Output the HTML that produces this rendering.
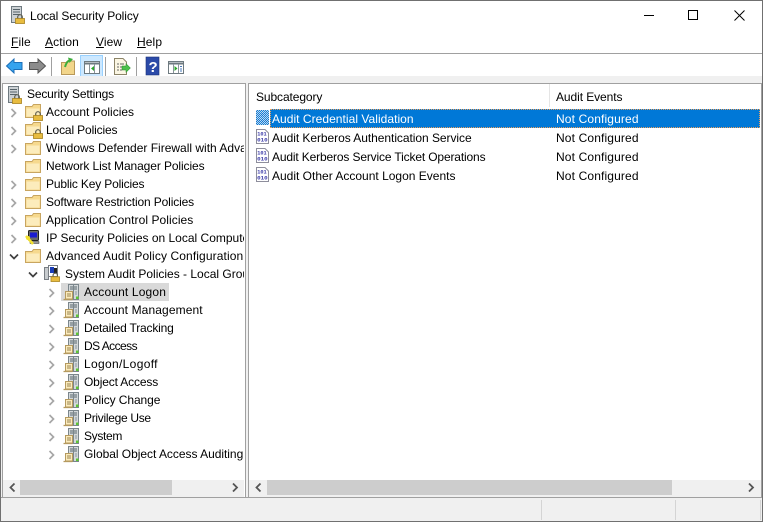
<!DOCTYPE html>
<html><head><meta charset="utf-8"><style>
html,body{margin:0;padding:0;background:#fff}
#w{position:relative;width:763px;height:522px;overflow:hidden;background:#fff;font:12px "Liberation Sans",sans-serif;color:#000}
#w div,#w svg{position:absolute}
.t{white-space:nowrap;line-height:16px;height:16px}
u{text-decoration:underline}
</style></head><body><div id="w">
<svg width="0" height="0"><defs>
<symbol id="folder" viewBox="0 0 16 16"><path d="M.5 3.500V14.500H15.500V1.500H8.500L7 3.500H.5Z" fill="#f6d98e" stroke="#c8a560"/><path d="M1.500 5.500H14.500V13.500H1.500Z" fill="#fcecbc"/></symbol>
<symbol id="lock" viewBox="0 0 10 10"><path d="M2.700 5V3A2.300 2.300 0 0 1 7.300 3V5" fill="none" stroke="#5e5e50" stroke-width="1.200"/><rect x=".5" y="4.500" width="9" height="5" fill="#e8bc40" stroke="#a8831f" stroke-width=".8"/></symbol>
<symbol id="srv" viewBox="0 0 16 17"><rect x="5.500" y=".5" width="10" height="15" fill="#d3d8da" stroke="#7b868c"/><path d="M7 3H14M7 5H14" stroke="#5b676d"/><path d="M10.500 1V15" stroke="#7b868c"/><path d="M12 8h2M12 10h2" stroke="#8d989e"/><rect x="2.500" y="7.500" width="7" height="7.500" fill="#fbebbc" stroke="#b59a5f"/><path d="M4 10h4M4 12h4" stroke="#9a8654"/><path d="M.5 15.500H9.500" stroke="#b59a5f" stroke-width="1.300"/><rect x="13" y="12.500" width="2.500" height="2.500" fill="#5cc832"/></symbol>
<symbol id="aud" viewBox="0 0 13 15"><path d="M.5.5H9L12.500 4V14.500H.5Z" fill="#fff" stroke="#8e8e9c"/><text x="1.200" y="6.400" font-size="5.600" font-weight="bold" font-family="Liberation Mono" fill="#3a3aa8" textLength="9.500" lengthAdjust="spacingAndGlyphs">101</text><text x="1.200" y="12.600" font-size="5.600" font-weight="bold" font-family="Liberation Mono" fill="#3a3aa8" textLength="10.500" lengthAdjust="spacingAndGlyphs">010</text></symbol>
<symbol id="chr" viewBox="0 0 8 10"><path d="M1.500 1L5.500 5L1.500 9" fill="none" stroke="#a6a6a6" stroke-width="1.700"/></symbol>
<symbol id="chd" viewBox="0 0 10 8"><path d="M1 1.500L5 5.500L9 1.500" fill="none" stroke="#404040" stroke-width="1.700"/></symbol>
<symbol id="sec" viewBox="0 0 14 18"><rect x=".5" y=".5" width="10" height="16" fill="#ccd1d4" stroke="#6f7a80"/><path d="M2 3.500h7M2 6h7M2 8.500h7" stroke="#56636a"/><use href="#lock" x="4" y="8" width="10" height="10"/></symbol>
</defs></svg>

<div style="left:0;top:0;width:763px;height:1px;background:#707070"></div>
<div style="left:0;top:0;width:1px;height:522px;background:#707070"></div>
<div style="left:762px;top:0;width:1px;height:522px;background:#707070"></div>
<div style="left:0;top:521px;width:763px;height:1px;background:#707070"></div>

<svg style="left:11px;top:6px" width="14" height="18"><use href="#sec"/></svg>
<div class="t" style="left:30px;top:8px;letter-spacing:-.1px">Local Security Policy</div>
<svg style="left:640px;top:5px" width="115" height="22"><path d="M4 10.500H14" stroke="#000"/><rect x="48.500" y="5.500" width="9" height="9" fill="none" stroke="#000"/><path d="M94.500 5.500L104.500 15.500M104.500 5.500L94.500 15.500" stroke="#000" fill="none"/></svg>

<div class="t" style="left:11px;top:34px;letter-spacing:.1px"><u>F</u>ile</div>
<div class="t" style="left:45px;top:34px;letter-spacing:.1px"><u>A</u>ction</div>
<div class="t" style="left:96px;top:34px;letter-spacing:.1px"><u>V</u>iew</div>
<div class="t" style="left:137px;top:34px;letter-spacing:.1px"><u>H</u>elp</div>
<div style="left:1px;top:53px;width:761px;height:1px;background:#a0a0a0"></div>

<div style="left:80px;top:55px;width:21px;height:20px;background:#cce8ff;border:1px solid #99d1ff"></div>
<svg style="left:0;top:54px" width="200" height="23" viewBox="0 0 200 23">
<path d="M6.500 12L14 5V8.500H22V15.500H14V19Z" fill="#35a3ee" stroke="#1d6fb8"/>
<path d="M45.500 12L38 5V8.500H29.500V15.500H38V19Z" fill="#8c8c8c" stroke="#555"/>
<path d="M51.500 3V22M105.500 3V22M136.500 3V22" stroke="#a0a0a0"/>
<path d="M61.500 8.500H66L67.500 7H74.500V20.500H61.500Z" fill="#f2d58a" stroke="#b9995a"/><path d="M65 13C66 9 68 7 70 6" fill="none" stroke="#3cae3c" stroke-width="2"/><path d="M68 3.500L73 5L69.500 9Z" fill="#3cae3c"/>
<rect x="84.500" y="7.500" width="15" height="12" fill="#fff" stroke="#6e7a80"/><path d="M84.500 9.500H99.500" stroke="#6e7a80" stroke-width="2"/><path d="M89.500 10V19M94.500 10V19" stroke="#8a949a"/><path d="M94 12V17L91 14.500Z" fill="#2ba82b"/>
<path d="M114.500 4.500H123L126.500 8V20.500H114.500Z" fill="#fbf6e3" stroke="#8c8468"/><path d="M117 10h2M117 13h2M117 16h2M120 10h4M120 13h2M120 16h2" stroke="#666"/><path d="M122 12H126V9.500L130.500 14L126 18.500V16H122Z" fill="#4cc04c" stroke="#2b8a2b" stroke-width=".5"/>
<rect x="146" y="3" width="13" height="18" fill="#2b4aa8" stroke="#1c3278" stroke-width=".6"/><text x="148.500" y="18" font-size="15" font-weight="bold" font-family="Liberation Sans" fill="#fff">?</text>
<rect x="168.500" y="7.500" width="15" height="12" fill="#fff" stroke="#6e7a80"/><path d="M168.500 9.500H183.500" stroke="#6e7a80" stroke-width="2"/><path d="M173.500 10V19M178.500 10V19" stroke="#8a949a"/><path d="M174.500 12V17L177.500 14.500Z" fill="#2ba82b"/><path d="M180 12.500h2M180 15h2M180 17h2" stroke="#4a78b8"/>
</svg>

<div style="left:1px;top:76px;width:761px;height:422px;background:#f0f0f0"></div>
<div style="left:2px;top:83px;width:242px;height:414px;background:#fff;border:1px solid #a0a0a0"></div>
<div style="left:248px;top:83px;width:512px;height:414px;background:#fff;border:1px solid #a0a0a0"></div>

<svg style="left:8px;top:86px" width="14" height="18"><use href="#sec"/></svg>
<div class="t" style="left:27px;top:86px;letter-spacing:-.18px">Security Settings</div>

<svg style="left:10px;top:108px" width="8" height="10"><use href="#chr"/></svg>
<svg style="left:25px;top:103px" width="16" height="16"><use href="#folder"/></svg>
<svg style="left:33px;top:111px" width="10" height="10"><use href="#lock"/></svg>
<div class="t" style="left:46px;top:104px">Account Policies</div>

<svg style="left:10px;top:126px" width="8" height="10"><use href="#chr"/></svg>
<svg style="left:25px;top:121px" width="16" height="16"><use href="#folder"/></svg>
<svg style="left:33px;top:129px" width="10" height="10"><use href="#lock"/></svg>
<div class="t" style="left:46px;top:122px;letter-spacing:-.14px">Local Policies</div>

<svg style="left:10px;top:144px" width="8" height="10"><use href="#chr"/></svg>
<svg style="left:25px;top:140px" width="16" height="16"><use href="#folder"/></svg>
<div class="t" style="left:46px;top:140px;width:198px;overflow:hidden">Windows Defender Firewall with Advanced</div>

<svg style="left:25px;top:158px" width="16" height="16"><use href="#folder"/></svg>
<div class="t" style="left:46px;top:158px;letter-spacing:-.1px">Network List Manager Policies</div>

<svg style="left:10px;top:180px" width="8" height="10"><use href="#chr"/></svg>
<svg style="left:25px;top:176px" width="16" height="16"><use href="#folder"/></svg>
<div class="t" style="left:46px;top:176px;letter-spacing:-.16px">Public Key Policies</div>

<svg style="left:10px;top:198px" width="8" height="10"><use href="#chr"/></svg>
<svg style="left:25px;top:194px" width="16" height="16"><use href="#folder"/></svg>
<div class="t" style="left:46px;top:194px;letter-spacing:-.14px">Software Restriction Policies</div>

<svg style="left:10px;top:216px" width="8" height="10"><use href="#chr"/></svg>
<svg style="left:25px;top:212px" width="16" height="16"><use href="#folder"/></svg>
<div class="t" style="left:46px;top:212px;letter-spacing:.07px">Application Control Policies</div>

<svg style="left:10px;top:234px" width="8" height="10"><use href="#chr"/></svg>
<svg style="left:25px;top:230px" width="16" height="16" viewBox="0 0 16 16"><rect x="3.500" y=".5" width="10" height="10" rx="1" fill="#6a6a6a" stroke="#222"/><rect x="5" y="2.500" width="7" height="5" fill="#1a1ad0"/><path d="M5 11.500H14V13.500H5Z" fill="#999" stroke="#333" stroke-width=".5"/><path d="M1 6L8 14" stroke="#f2e030" stroke-width="2.500"/><circle cx="3" cy="8" r="2" fill="#f2e030"/></svg>
<div class="t" style="left:46px;top:230px;width:198px;overflow:hidden">IP Security Policies on Local Computer</div>

<svg style="left:9px;top:253px" width="10" height="8"><use href="#chd"/></svg>
<svg style="left:25px;top:248px" width="16" height="16"><use href="#folder"/></svg>
<div class="t" style="left:46px;top:248px;width:198px;overflow:hidden;letter-spacing:.11px">Advanced Audit Policy Configuration</div>

<svg style="left:28px;top:271px" width="10" height="8"><use href="#chd"/></svg>
<svg style="left:44px;top:265px" width="16" height="17" viewBox="0 0 16 17"><rect x=".5" y="2.500" width="4" height="12" fill="#c8cccf" stroke="#7a7f84"/><rect x="4.500" y=".5" width="9" height="11" fill="#fff" stroke="#7a7f84"/><rect x="6" y="2" width="4" height="6" fill="#1c3fb8"/><rect x="10" y="3" width="3" height="5" fill="#222"/><use href="#lock" x="6.500" y="7.500" width="9.500" height="9.500"/></svg>
<div class="t" style="left:65px;top:266px;width:179px;overflow:hidden">System Audit Policies - Local Group</div>

<div style="left:61px;top:283px;width:108px;height:18px;background:#d9d9d9"></div>
<svg style="left:48px;top:288px" width="8" height="10"><use href="#chr"/></svg><svg style="left:63px;top:284px" width="16" height="17"><use href="#srv"/></svg><div class="t" style="left:84px;top:284px;letter-spacing:.15px">Account Logon</div>
<svg style="left:48px;top:306px" width="8" height="10"><use href="#chr"/></svg><svg style="left:63px;top:302px" width="16" height="17"><use href="#srv"/></svg><div class="t" style="left:84px;top:302px;letter-spacing:.11px">Account Management</div>
<svg style="left:48px;top:324px" width="8" height="10"><use href="#chr"/></svg><svg style="left:63px;top:320px" width="16" height="17"><use href="#srv"/></svg><div class="t" style="left:84px;top:320px;letter-spacing:-.18px">Detailed Tracking</div>
<svg style="left:48px;top:342px" width="8" height="10"><use href="#chr"/></svg><svg style="left:63px;top:338px" width="16" height="17"><use href="#srv"/></svg><div class="t" style="left:84px;top:338px;letter-spacing:-.55px">DS Access</div>
<svg style="left:48px;top:360px" width="8" height="10"><use href="#chr"/></svg><svg style="left:63px;top:356px" width="16" height="17"><use href="#srv"/></svg><div class="t" style="left:84px;top:356px;letter-spacing:.33px">Logon/Logoff</div>
<svg style="left:48px;top:378px" width="8" height="10"><use href="#chr"/></svg><svg style="left:63px;top:374px" width="16" height="17"><use href="#srv"/></svg><div class="t" style="left:84px;top:374px;letter-spacing:-.15px">Object Access</div>
<svg style="left:48px;top:396px" width="8" height="10"><use href="#chr"/></svg><svg style="left:63px;top:392px" width="16" height="17"><use href="#srv"/></svg><div class="t" style="left:84px;top:392px;letter-spacing:-.08px">Policy Change</div>
<svg style="left:48px;top:414px" width="8" height="10"><use href="#chr"/></svg><svg style="left:63px;top:410px" width="16" height="17"><use href="#srv"/></svg><div class="t" style="left:84px;top:410px;letter-spacing:-.3px">Privilege Use</div>
<svg style="left:48px;top:432px" width="8" height="10"><use href="#chr"/></svg><svg style="left:63px;top:428px" width="16" height="17"><use href="#srv"/></svg><div class="t" style="left:84px;top:428px;letter-spacing:-.33px">System</div>
<svg style="left:48px;top:450px" width="8" height="10"><use href="#chr"/></svg><svg style="left:63px;top:446px" width="16" height="17"><use href="#srv"/></svg><div class="t" style="left:84px;top:446px;width:160px;overflow:hidden;letter-spacing:-.03px">Global Object Access Auditing</div>

<div style="left:3px;top:480px;width:241px;height:17px;background:#f0f0f0"></div>
<div style="left:20px;top:480px;width:152px;height:15px;background:#cdcdcd"></div>
<svg style="left:3px;top:480px" width="241" height="15"><path d="M11.500 3.500L7.500 7.500L11.500 11.500" fill="none" stroke="#555" stroke-width="1.800"/><path d="M230 3.500L234 7.500L230 11.500" fill="none" stroke="#555" stroke-width="1.800"/></svg>

<div class="t" style="left:256px;top:89px;letter-spacing:-.1px">Subcategory</div>
<div style="left:549px;top:84px;width:1px;height:23px;background:#e5e5e5"></div>
<div class="t" style="left:556px;top:89px;letter-spacing:-.08px">Audit Events</div>

<div style="left:270px;top:109px;width:490px;height:19px;background:#0078d7;box-sizing:border-box;border:1px dotted #e8a060"></div>
<svg style="left:256px;top:110px" width="13" height="15"><use href="#aud"/></svg>
<div style="left:256px;top:110px;width:13px;height:15px;background:repeating-conic-gradient(#0078d7 0 25%,#bcd6ef 0 50%) 0 0/2px 2px;opacity:.9"></div>
<div class="t" style="left:272px;top:111px;color:#fff;letter-spacing:.04px">Audit Credential Validation</div>
<div class="t" style="left:556px;top:111px;color:#fff;letter-spacing:.14px">Not Configured</div>

<svg style="left:256px;top:129px" width="13" height="15"><use href="#aud"/></svg>
<div class="t" style="left:272px;top:130px;letter-spacing:-.05px">Audit Kerberos Authentication Service</div>
<div class="t" style="left:556px;top:130px;letter-spacing:.14px">Not Configured</div>

<svg style="left:256px;top:148px" width="13" height="15"><use href="#aud"/></svg>
<div class="t" style="left:272px;top:149px;letter-spacing:-.15px">Audit Kerberos Service Ticket Operations</div>
<div class="t" style="left:556px;top:149px;letter-spacing:.14px">Not Configured</div>

<svg style="left:256px;top:167px" width="13" height="15"><use href="#aud"/></svg>
<div class="t" style="left:272px;top:168px">Audit Other Account Logon Events</div>
<div class="t" style="left:556px;top:168px;letter-spacing:.14px">Not Configured</div>

<div style="left:249px;top:480px;width:512px;height:17px;background:#f0f0f0"></div>
<div style="left:267px;top:480px;width:405px;height:15px;background:#cdcdcd"></div>
<svg style="left:249px;top:480px" width="512" height="15"><path d="M11.500 3.500L7.500 7.500L11.500 11.500" fill="none" stroke="#555" stroke-width="1.800"/><path d="M500 3.500L504 7.500L500 11.500" fill="none" stroke="#555" stroke-width="1.800"/></svg>

<div style="left:1px;top:498px;width:761px;height:23px;background:#f0f0f0"></div>
<div style="left:541px;top:500px;width:1px;height:20px;background:#d4d4d4"></div>
<div style="left:675px;top:500px;width:1px;height:20px;background:#d4d4d4"></div>
<div style="left:760px;top:500px;width:1px;height:20px;background:#d4d4d4"></div>
<div style="left:1px;top:497px;width:761px;height:1px;background:#a0a0a0"></div>
</div></body></html>
